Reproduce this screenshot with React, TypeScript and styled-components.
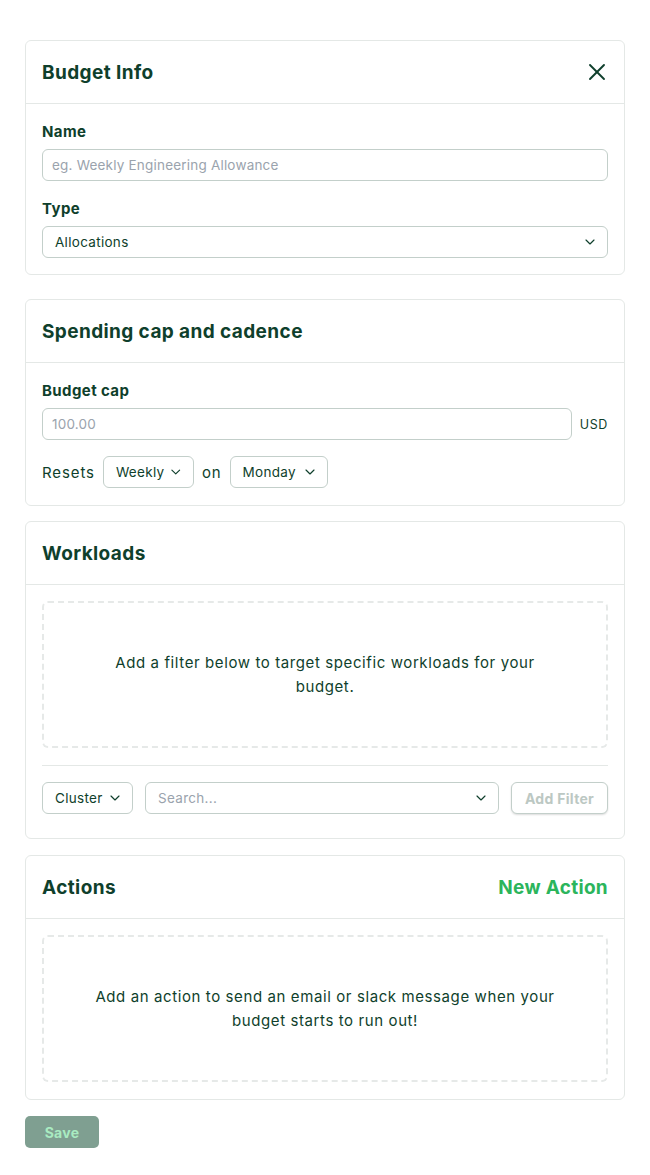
import styled, { createGlobalStyle } from 'styled-components';
import { X, ChevronDown } from 'lucide-react';

// ─── Theme values ─────────────────────────────────────────────────────────────

const ink = '#0f3f2c';
const muted = '#9aa3ad';
const fieldBorder = '#c3cfca';
const cardBorder = '#e4e8e6';
const font = `Inter, "Noto Sans", sans-serif`;

const GlobalStyle = createGlobalStyle`
  body {
    margin: 0;
    background: #ffffff;
    font-family: ${font};
    color: ${ink};
  }
  * { box-sizing: border-box; }
`;

// ─── Styled Components ────────────────────────────────────────────────────────

const Page = styled.div`
  padding: 40px 25px 27px;
  display: flex;
  flex-direction: column;
`;

const Card = styled.section<{ $gap?: number }>`
  border: 1px solid ${cardBorder};
  border-radius: 6px;
  background: #fff;
  margin-bottom: ${({ $gap }) => $gap ?? 16}px;
`;

const CardHeader = styled.header`
  height: 63px;
  padding: 0 16px;
  display: flex;
  align-items: center;
  justify-content: space-between;
  border-bottom: 1px solid ${cardBorder};
`;

const CardTitle = styled.h2`
  margin: 0;
  font-size: 19px;
  font-weight: 700;
  color: ${ink};
  letter-spacing: 0.4px;
`;

const CloseBtn = styled.button`
  border: none;
  background: none;
  padding: 0;
  margin-right: -3px;
  display: flex;
  color: ${ink};
  cursor: pointer;
`;

const NewAction = styled.button`
  border: none;
  background: none;
  padding: 0;
  font-family: ${font};
  font-size: 19px;
  font-weight: 700;
  letter-spacing: 0.3px;
  color: #2bb55c;
  cursor: pointer;
`;

const CardBody = styled.div<{ $pb?: number }>`
  padding: 16px 16px ${({ $pb }) => $pb ?? 16}px;
  display: flex;
  flex-direction: column;
`;

const Label = styled.label`
  display: block;
  font-size: 15px;
  font-weight: 700;
  letter-spacing: 0.4px;
  color: ${ink};
  margin: 2px 0 8px;
`;

const Field = styled.div<{ $mb?: number }>`
  margin-bottom: ${({ $mb }) => $mb ?? 0}px;
`;

const TextInput = styled.input`
  width: 100%;
  height: 32px;
  padding: 0 9px;
  border: 1px solid ${fieldBorder};
  border-radius: 6px;
  font-family: ${font};
  font-size: 13.5px;
  letter-spacing: 0.2px;
  color: ${ink};
  outline: none;

  &::placeholder {
    color: ${muted};
  }
`;

const SelectBox = styled.button<{ $grow?: boolean; $w?: number }>`
  height: 32px;
  padding: 0 9px 0 12px;
  border: 1px solid ${fieldBorder};
  border-radius: 6px;
  background: #fff;
  display: flex;
  align-items: center;
  justify-content: space-between;
  gap: 4px;
  font-family: ${font};
  font-size: 13.5px;
  letter-spacing: 0.3px;
  color: ${ink};
  flex: ${({ $grow }) => ($grow ? 1 : 'none')};
  width: ${({ $grow, $w }) => ($grow ? '100%' : $w ? `${$w}px` : 'auto')};
  cursor: pointer;
`;

const Placeholder = styled.span`
  color: ${muted};
`;

const CapRow = styled.div`
  display: flex;
  align-items: center;
  gap: 8px;
`;

const Unit = styled.span`
  font-size: 12.5px;
  color: ${ink};
  letter-spacing: 0.6px;
`;

const ResetRow = styled.div`
  display: flex;
  align-items: center;
  gap: 8px;
  margin-top: 16px;
  font-size: 15px;
  letter-spacing: 0.9px;
  color: ${ink};
`;

const EmptyBox = styled.div`
  height: 147px;
  border: 2px dashed #e6e9e8;
  border-radius: 6px;
  display: flex;
  align-items: center;
  justify-content: center;
  padding: 0 46px;
  text-align: center;
  font-size: 15px;
  letter-spacing: 0.6px;
  line-height: 24px;
  color: ${ink};
`;

const Divider = styled.hr`
  border: none;
  height: 1px;
  background: ${cardBorder};
  margin: 17px 0 16px;
`;

const FilterRow = styled.div`
  display: flex;
  align-items: center;
  gap: 12px;
`;

const GhostButton = styled.button`
  height: 32px;
  width: 97px;
  border: 1px solid ${fieldBorder};
  border-radius: 6px;
  background: #fff;
  box-shadow: 0 1px 2px rgba(0, 0, 0, 0.14);
  font-family: ${font};
  font-size: 14px;
  font-weight: 700;
  letter-spacing: 0.3px;
  color: #bcc8c3;
`;

const SaveButton = styled.button`
  align-self: flex-start;
  height: 32px;
  width: 74px;
  border: none;
  border-radius: 5px;
  background: #7f9f91;
  font-family: ${font};
  font-size: 14px;
  font-weight: 700;
  letter-spacing: 0.3px;
  color: #a9ebc1;
`;

// ─── Component ────────────────────────────────────────────────────────────────

const Chevron = () => <ChevronDown size={16} strokeWidth={1.75} />;

export default function App() {
  return (
    <>
      <GlobalStyle />
      <Page>
        <Card $gap={24}>
          <CardHeader>
            <CardTitle>Budget Info</CardTitle>
            <CloseBtn aria-label="Close">
              <X size={28} strokeWidth={1.6} />
            </CloseBtn>
          </CardHeader>
          <CardBody>
            <Field $mb={16}>
              <Label>Name</Label>
              <TextInput placeholder="eg. Weekly Engineering Allowance" />
            </Field>
            <Field>
              <Label>Type</Label>
              <SelectBox $grow>
                Allocations
                <Chevron />
              </SelectBox>
            </Field>
          </CardBody>
        </Card>

        <Card $gap={15}>
          <CardHeader>
            <CardTitle>Spending cap and cadence</CardTitle>
          </CardHeader>
          <CardBody $pb={17}>
            <Label>Budget cap</Label>
            <CapRow>
              <TextInput placeholder="100.00" />
              <Unit>USD</Unit>
            </CapRow>
            <ResetRow>
              Resets
              <SelectBox $w={91}>
                Weekly
                <Chevron />
              </SelectBox>
              on
              <SelectBox $w={98}>
                Monday
                <Chevron />
              </SelectBox>
            </ResetRow>
          </CardBody>
        </Card>

        <Card>
          <CardHeader>
            <CardTitle>Workloads</CardTitle>
          </CardHeader>
          <CardBody $pb={24}>
            <EmptyBox>
              Add a filter below to target specific workloads for your budget.
            </EmptyBox>
            <Divider />
            <FilterRow>
              <SelectBox $w={91}>
                Cluster
                <Chevron />
              </SelectBox>
              <SelectBox $grow>
                <Placeholder>Search...</Placeholder>
                <Chevron />
              </SelectBox>
              <GhostButton>Add Filter</GhostButton>
            </FilterRow>
          </CardBody>
        </Card>

        <Card>
          <CardHeader>
            <CardTitle>Actions</CardTitle>
            <NewAction>New Action</NewAction>
          </CardHeader>
          <CardBody $pb={17}>
            <EmptyBox>
              Add an action to send an email or slack message when your budget
              starts to run out!
            </EmptyBox>
          </CardBody>
        </Card>

        <SaveButton>Save</SaveButton>
      </Page>
    </>
  );
}
